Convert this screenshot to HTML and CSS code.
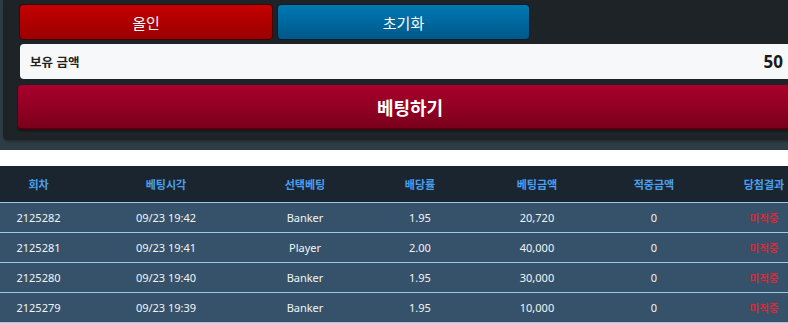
FILE: index.html
```html
<!DOCTYPE html>
<html lang="ko">
<head>
    <meta charset="UTF-8">
    <meta name="viewport" content="width=device-width, initial-scale=1.0">
    <title>Betting</title>
    <link rel="stylesheet" href="styles.css">
</head>
<body>
    <div class="page">
        <div class="bet-panel">
            <div class="btn-row">
                <button class="btn btn-allin">올인</button>
                <button class="btn btn-reset">초기화</button>
            </div>
            <div class="balance">
                <span class="balance-label">보유 금액</span>
                <span class="balance-value">50</span>
            </div>
            <button class="btn-bet">베팅하기</button>
        </div>
    </div>

    <table class="history">
        <colgroup>
            <col style="width: 77px">
            <col style="width: 178px">
            <col style="width: 100px">
            <col style="width: 130px">
            <col style="width: 104px">
            <col style="width: 130px">
            <col style="width: 90px">
        </colgroup>
        <thead>
            <tr>
                <th>회차</th>
                <th>베팅시각</th>
                <th>선택베팅</th>
                <th>배당률</th>
                <th>베팅금액</th>
                <th>적중금액</th>
                <th>당첨결과</th>
            </tr>
        </thead>
        <tbody>
            <tr>
                <td>2125282</td>
                <td>09/23 19:42</td>
                <td>Banker</td>
                <td>1.95</td>
                <td>20,720</td>
                <td>0</td>
                <td class="miss">미적중</td>
            </tr>
            <tr>
                <td>2125281</td>
                <td>09/23 19:41</td>
                <td>Player</td>
                <td>2.00</td>
                <td>40,000</td>
                <td>0</td>
                <td class="miss">미적중</td>
            </tr>
            <tr>
                <td>2125280</td>
                <td>09/23 19:40</td>
                <td>Banker</td>
                <td>1.95</td>
                <td>30,000</td>
                <td>0</td>
                <td class="miss">미적중</td>
            </tr>
            <tr>
                <td>2125279</td>
                <td>09/23 19:39</td>
                <td>Banker</td>
                <td>1.95</td>
                <td>10,000</td>
                <td>0</td>
                <td class="miss">미적중</td>
            </tr>
        </tbody>
    </table>
</body>
</html>
```

FILE: styles.css
```css
body {
    margin: 0;
    background: #fff;
    font-family: "Noto Sans", "Noto Sans CJK KR", sans-serif;
    overflow: hidden;
    width: 818px;
}
.page {
    background: #2e3c45;
    padding: 0 0 10px 3px;
}
.bet-panel {
    background: #1d2327;
    border-radius: 0 0 0 5px;
    padding: 4px 16px 10px 15px;
    box-shadow: 0 2px 2px rgba(0, 0, 0, 0.25);
}
.btn-row {
    display: grid;
    grid-template-columns: 254px 253px 254px;
    gap: 4px;
    margin-left: 1px;
}
.btn {
    height: 36px;
    border: 1px solid #16191b;
    border-radius: 4px;
    color: #fff;
    font-family: "Noto Sans CJK KR", sans-serif;
    font-size: 15px;
    padding: 0;
}
.btn-allin {
    background: linear-gradient(#c40000, #9a0000);
    border-color: #3a0606;
}
.btn-reset {
    background: linear-gradient(#0079b3, #00578a);
    border-color: #0a1c28;
}
.balance {
    display: flex;
    align-items: center;
    justify-content: space-between;
    height: 35px;
    margin: 4px 0 0 2px;
    padding: 0 19px 0 10px;
    background: #f7f8f9;
    border-radius: 4px;
}
.balance-label {
    font-family: "Noto Sans CJK KR", sans-serif;
    font-size: 12.5px;
    font-weight: bold;
    color: #222;
}
.balance-value {
    font-size: 17px;
    font-weight: bold;
    color: #1a1a1a;
}
.btn-bet {
    display: block;
    width: 100%;
    height: 45px;
    margin-top: 6px;
    border: none;
    border-bottom: 2px solid #4a0010;
    border-radius: 4px;
    background: linear-gradient(#aa002b, #7a001b);
    color: #fff;
    font-family: "Noto Sans CJK KR", sans-serif;
    font-size: 18px;
    font-weight: bold;
    box-shadow: 0 1px 2px rgba(0, 0, 0, 0.5);
}
.history {
    margin-top: 16px;
    border-collapse: collapse;
    table-layout: fixed;
    width: 809px;
}
.history th {
    height: 36px;
    background: #1b2530;
    color: #4aa0ec;
    font-family: "Noto Sans CJK KR", sans-serif;
    font-size: 11px;
    font-weight: bold;
    border-bottom: 1px solid #9cc8e0;
    padding: 0;
}
.history td {
    height: 29px;
    background: #36526a;
    color: #f2f4f6;
    font-size: 11px;
    text-align: center;
    border-bottom: 1px solid #9cc8e0;
    padding: 0;
}
.history td.miss {
    color: #d62a3a;
    font-family: "Noto Sans CJK KR", sans-serif;
    font-size: 10.5px;
    font-weight: bold;
}
```
